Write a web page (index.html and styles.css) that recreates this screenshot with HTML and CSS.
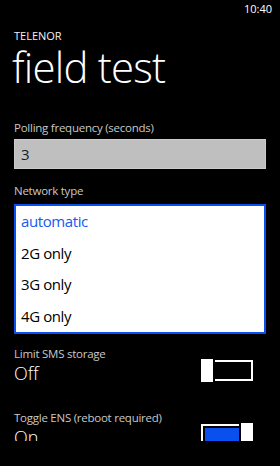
FILE: index.html
```html
<!DOCTYPE html>
<html>
<head>
<meta charset="utf-8">
<link rel="stylesheet" href="styles.css">
</head>
<body>
<div class="screen">
  <div class="status"><span class="time">10:40</span></div>
  <div class="viewport">
    <div class="header">
      <div class="app-title">TELENOR</div>
      <div class="page-title">field test</div>
    </div>
    <div class="settings">
      <div class="label">Polling frequency (seconds)</div>
      <div class="textbox">3</div>

      <div class="label gap">Network type</div>
      <div class="listbox">
        <div class="item selected">automatic</div>
        <div class="item">2G only</div>
        <div class="item">3G only</div>
        <div class="item">4G only</div>
      </div>

      <div class="toggle-row first">
        <div class="toggle-text">
          <div class="label">Limit SMS storage</div>
          <div class="value">Off</div>
        </div>
        <div class="switch off">
          <div class="track"><div class="fill"></div></div>
          <div class="thumb"></div>
        </div>
      </div>

      <div class="toggle-row second">
        <div class="toggle-text">
          <div class="label">Toggle ENS (reboot required)</div>
          <div class="value">On</div>
        </div>
        <div class="switch on">
          <div class="track"><div class="fill"></div></div>
          <div class="thumb"></div>
        </div>
      </div>
    </div>
  </div>
</div>
</body>
</html>
```

FILE: styles.css
```css
* { box-sizing: border-box; }
html, body {
  margin: 0;
  padding: 0;
  background: #000;
}
body {
  width: 280px;
  height: 466px;
  overflow: hidden;
  font-family: "Open Sans", "Noto Sans", sans-serif;
  color: #fff;
}
.screen {
  width: 280px;
  height: 466px;
  background: #000;
}
.status {
  height: 18px;
  display: flex;
  justify-content: flex-end;
  align-items: center;
  padding-right: 8px;
}
.time {
  font-size: 11px;
  line-height: 18px;
  color: #fff;
}
.viewport {
  height: 423px;
  overflow: hidden;
}
.header {
  padding: 11px 0 0 14px;
}
.app-title {
  font-size: 11px;
  line-height: 14px;
  font-weight: 400;
  color: #f2f2f2;
}
.page-title {
  font-size: 42px;
  line-height: 48px;
  font-weight: 300;
  letter-spacing: -0.8px;
  margin-left: -2px;
}
.settings {
  padding: 29px 14px 0 14px;
}
.label {
  font-size: 11.5px;
  line-height: 16px;
  letter-spacing: -0.25px;
  color: #c8c8c8;
}
.label.gap {
  margin-top: 14px;
}
.textbox {
  margin-top: 3px;
  height: 30px;
  background: #bfbfbf;
  border: 1px solid #cccccc;
  color: #1a1a1a;
  font-size: 15px;
  line-height: 28px;
  padding-left: 6px;
}
.listbox {
  margin-top: 5px;
  background: #fff;
  border: 2px solid #0a50ef;
  padding: 0;
}
.item {
  height: 31.5px;
  line-height: 31.5px;
  font-size: 15px;
  letter-spacing: -0.4px;
  color: #000;
  padding-left: 5px;
}
.item.selected {
  color: #1658f0;
}
.toggle-row {
  display: flex;
  justify-content: space-between;
  align-items: flex-end;
  padding-right: 13px;
}
.toggle-row.first { margin-top: 12px; }
.toggle-row.second { margin-top: 26px; }
.value {
  font-size: 18px;
  line-height: 22px;
  font-weight: 300;
  color: #fff;
}
.switch {
  position: relative;
  width: 52px;
  height: 23px;
  margin-bottom: 2px;
}
.track {
  position: absolute;
  left: 0;
  right: 0;
  top: 1px;
  bottom: 1px;
  border: 2px solid #fff;
  padding: 2px;
  background: #000;
}
.fill {
  height: 100%;
  width: 0;
  background: #0a50ef;
}
.switch.on .fill { width: 34px; }
.thumb {
  position: absolute;
  top: 0;
  width: 12px;
  height: 23px;
  background: #fff;
  box-shadow: 0 0 0 2px #000;
}
.switch.off .thumb { left: 0; }
.switch.on .thumb { right: 0; }
```
